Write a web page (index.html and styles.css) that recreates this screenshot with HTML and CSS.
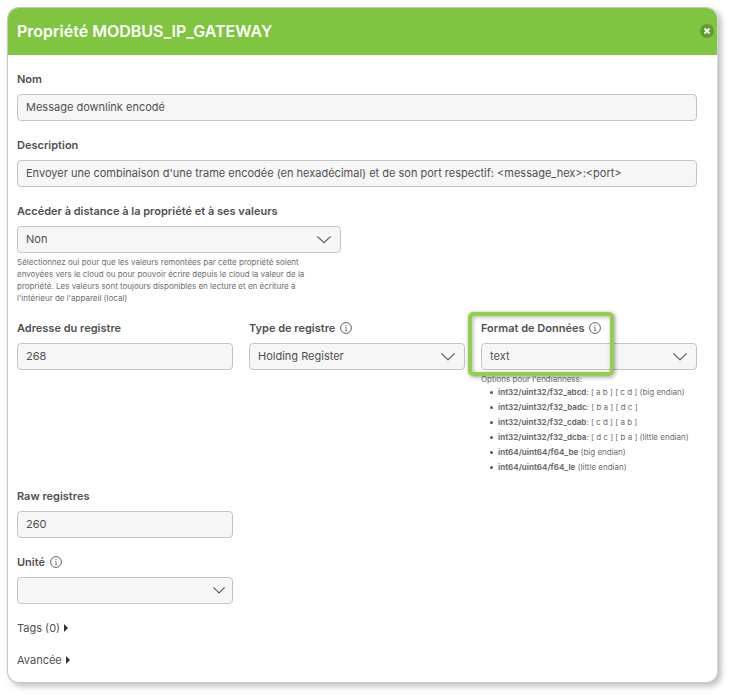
FILE: index.html
```html
<!DOCTYPE html>
<html lang="fr">
<head>
<meta charset="utf-8">
<title>Propriété MODBUS_IP_GATEWAY</title>
<link rel="stylesheet" href="styles.css">
</head>
<body>
<svg class="sprite" aria-hidden="true">
  <symbol id="info" viewBox="0 0 12 12">
    <circle cx="6" cy="6" r="5.4" fill="none" stroke="currentColor" stroke-width=".9"/>
    <circle cx="6" cy="3.6" r=".6" fill="currentColor"/>
    <path d="M5.2 5.4H6.1V8.6M5 8.7H7.2" fill="none" stroke="currentColor" stroke-width=".7"/>
  </symbol>
  <symbol id="chevron" viewBox="0 0 14 8">
    <path d="M.7.7 7 6.8 13.3.7" fill="none" stroke="currentColor" stroke-width="1.2" stroke-linecap="round" stroke-linejoin="round"/>
  </symbol>
</svg>
<main class="dialog">
  <header class="dialog-header">
    <h1>Propriété MODBUS_IP_GATEWAY</h1>
    <button class="close" type="button" aria-label="Fermer">
      <svg viewBox="0 0 14 14"><path d="M4.5 4.5 9.5 9.5M9.5 4.5 4.5 9.5" stroke="#fff" stroke-width="1.8"/></svg>
    </button>
  </header>
  <form class="dialog-body">
    <div class="field">
      <label for="nom">Nom</label>
      <input class="control" id="nom" type="text" value="Message downlink encodé">
    </div>
    <div class="field">
      <label for="description">Description</label>
      <input class="control" id="description" type="text" value="Envoyer une combinaison d'une trame encodée (en hexadécimal) et de son port respectif: &lt;message_hex&gt;:&lt;port&gt;">
    </div>
    <div class="field half">
      <label for="acces">Accéder à distance à la propriété et à ses valeurs</label>
      <div class="select">
        <select class="control" id="acces"><option>Non</option></select>
        <svg class="chevron"><use href="#chevron"/></svg>
      </div>
      <p class="help">Sélectionnez oui pour que les valeurs remontées par cette propriété soient envoyées vers le cloud ou pour pouvoir écrire depuis le cloud la valeur de la propriété. Les valeurs sont toujours disponibles en lecture et en écriture à l'intérieur de l'appareil (local)</p>
    </div>
    <div class="columns">
      <div class="field">
        <label for="adresse">Adresse du registre</label>
        <input class="control" id="adresse" type="text" value="268">
      </div>
      <div class="field">
        <label for="type">Type de registre <svg class="info"><use href="#info"/></svg></label>
        <div class="select">
          <select class="control" id="type"><option>Holding Register</option></select>
          <svg class="chevron"><use href="#chevron"/></svg>
        </div>
      </div>
      <div class="field highlighted">
        <label for="format">Format de Données <svg class="info"><use href="#info"/></svg></label>
        <div class="select">
          <select class="control" id="format"><option>text</option></select>
          <svg class="chevron"><use href="#chevron"/></svg>
        </div>
        <div class="help options">
          Options pour l'endianness:
          <ul>
            <li><b>int32/uint32/f32_abcd</b>: [ a b ] [ c d ] (big endian)</li>
            <li><b>int32/uint32/f32_badc</b>: [ b a ] [ d c ]</li>
            <li><b>int32/uint32/f32_cdab</b>: [ c d ] [ a b ]</li>
            <li><b>int32/uint32/f32_dcba</b>: [ d c ] [ b a ] (little endian)</li>
            <li><b>int64/uint64/f64_be</b> (big endian)</li>
            <li><b>int64/uint64/f64_le</b> (little endian)</li>
          </ul>
        </div>
      </div>
    </div>
    <div class="columns">
      <div class="field">
        <label for="raw">Raw registres</label>
        <input class="control" id="raw" type="text" value="260">
      </div>
    </div>
    <div class="columns">
      <div class="field">
        <label for="unite">Unité <svg class="info"><use href="#info"/></svg></label>
        <div class="select compact">
          <select class="control" id="unite"><option></option></select>
          <svg class="chevron"><use href="#chevron"/></svg>
        </div>
      </div>
    </div>
    <button class="toggle" type="button">Tags (0)</button>
    <button class="toggle" type="button">Avancée</button>
  </form>
</main>
</body>
</html>
```
FILE: styles.css
```css
*,
*::after {
  box-sizing: border-box;
}

body {
  margin: 0;
  padding: 7px 11px 12px 7px;
  background: #fff;
  color: #505052;
  font: 11px/16px Inter, "Liberation Sans", sans-serif;
}

.sprite {
  display: none;
}

.dialog {
  border: 1px solid #c8c8c8;
  border-right-color: #d4d4d4;
  border-radius: 12px;
  background: #fff;
  box-shadow: 3px 3px 6px rgba(0, 0, 0, .28);
  overflow: hidden;
}

.dialog-header {
  display: flex;
  align-items: center;
  justify-content: space-between;
  height: 47px;
  padding: 0 3px 2px 9px;
  background: #7fc540;
  color: #fff;
}

h1 {
  margin: 0;
  font-size: 16px;
  font-weight: 600;
  line-height: 20px;
}

.close {
  width: 14px;
  height: 14px;
  padding: 0;
  border: 0;
  border-radius: 50%;
  background: #629b32;
}

.close svg {
  display: block;
}

.dialog-body {
  display: flex;
  flex-direction: column;
  gap: 16px;
  padding: 16px 20px 14px 9px;
}

.field {
  display: flex;
  flex-direction: column;
  gap: 7px;
  position: relative;
}

.half {
  width: calc(50% - 16px);
}

.columns {
  display: grid;
  grid-template-columns: repeat(3, minmax(0, 1fr));
  gap: 16px;
}

label {
  display: flex;
  align-items: center;
  gap: 5px;
  font-weight: 600;
}

.info {
  width: 12px;
  height: 12px;
}

.control {
  display: block;
  width: 100%;
  height: 27px;
  padding: 0 8px 2px;
  border: 1px solid #c4c4c4;
  border-radius: 4px;
  background: #f6f6f6;
  color: inherit;
  font: inherit;
  appearance: none;
}

.select {
  display: grid;
  align-items: center;
}

.select > * {
  grid-area: 1 / 1;
}

.chevron {
  justify-self: end;
  width: 14px;
  height: 8px;
  margin-right: 10px;
  color: #6c6c6e;
  pointer-events: none;
}

.compact .chevron {
  width: 12px;
  height: 7px;
  margin-right: 8px;
  color: #4c4c5a;
}

.help {
  margin: -4px 24px 0 0;
  color: #6e6e70;
  font-size: 8px;
  line-height: 12px;
}

.options {
  margin-right: 0;
}

.options ul {
  margin: 0 0 -3px;
  padding-left: 9px;
  line-height: 15px;
  list-style: none;
  white-space: nowrap;
}

.options li {
  display: flex;
  align-items: center;
  white-space: pre;
}

.options li::before {
  content: "";
  width: 3px;
  height: 3px;
  margin-right: 5px;
  border-radius: 50%;
  background: #58585a;
}

.options b {
  font-weight: 700;
}

/* Frame drawn over the label and the start of the drop-down */
.highlighted::after {
  content: "";
  position: absolute;
  top: -8px;
  left: -13px;
  width: 146px;
  height: 64px;
  border: 4px solid #92cf4c;
  border-radius: 5px;
  box-shadow: 1px 1px 4px rgba(0, 0, 0, .4), inset 1px 1px 4px rgba(0, 0, 0, .3);
  pointer-events: none;
}

.toggle {
  display: flex;
  align-items: center;
  gap: 4px;
  align-self: flex-start;
  padding: 0;
  border: 0;
  background: none;
  color: inherit;
  font: inherit;
}

.toggle::after {
  content: "";
  border: solid transparent;
  border-width: 4px 0 4px 4px;
  border-left-color: #333;
}
```
